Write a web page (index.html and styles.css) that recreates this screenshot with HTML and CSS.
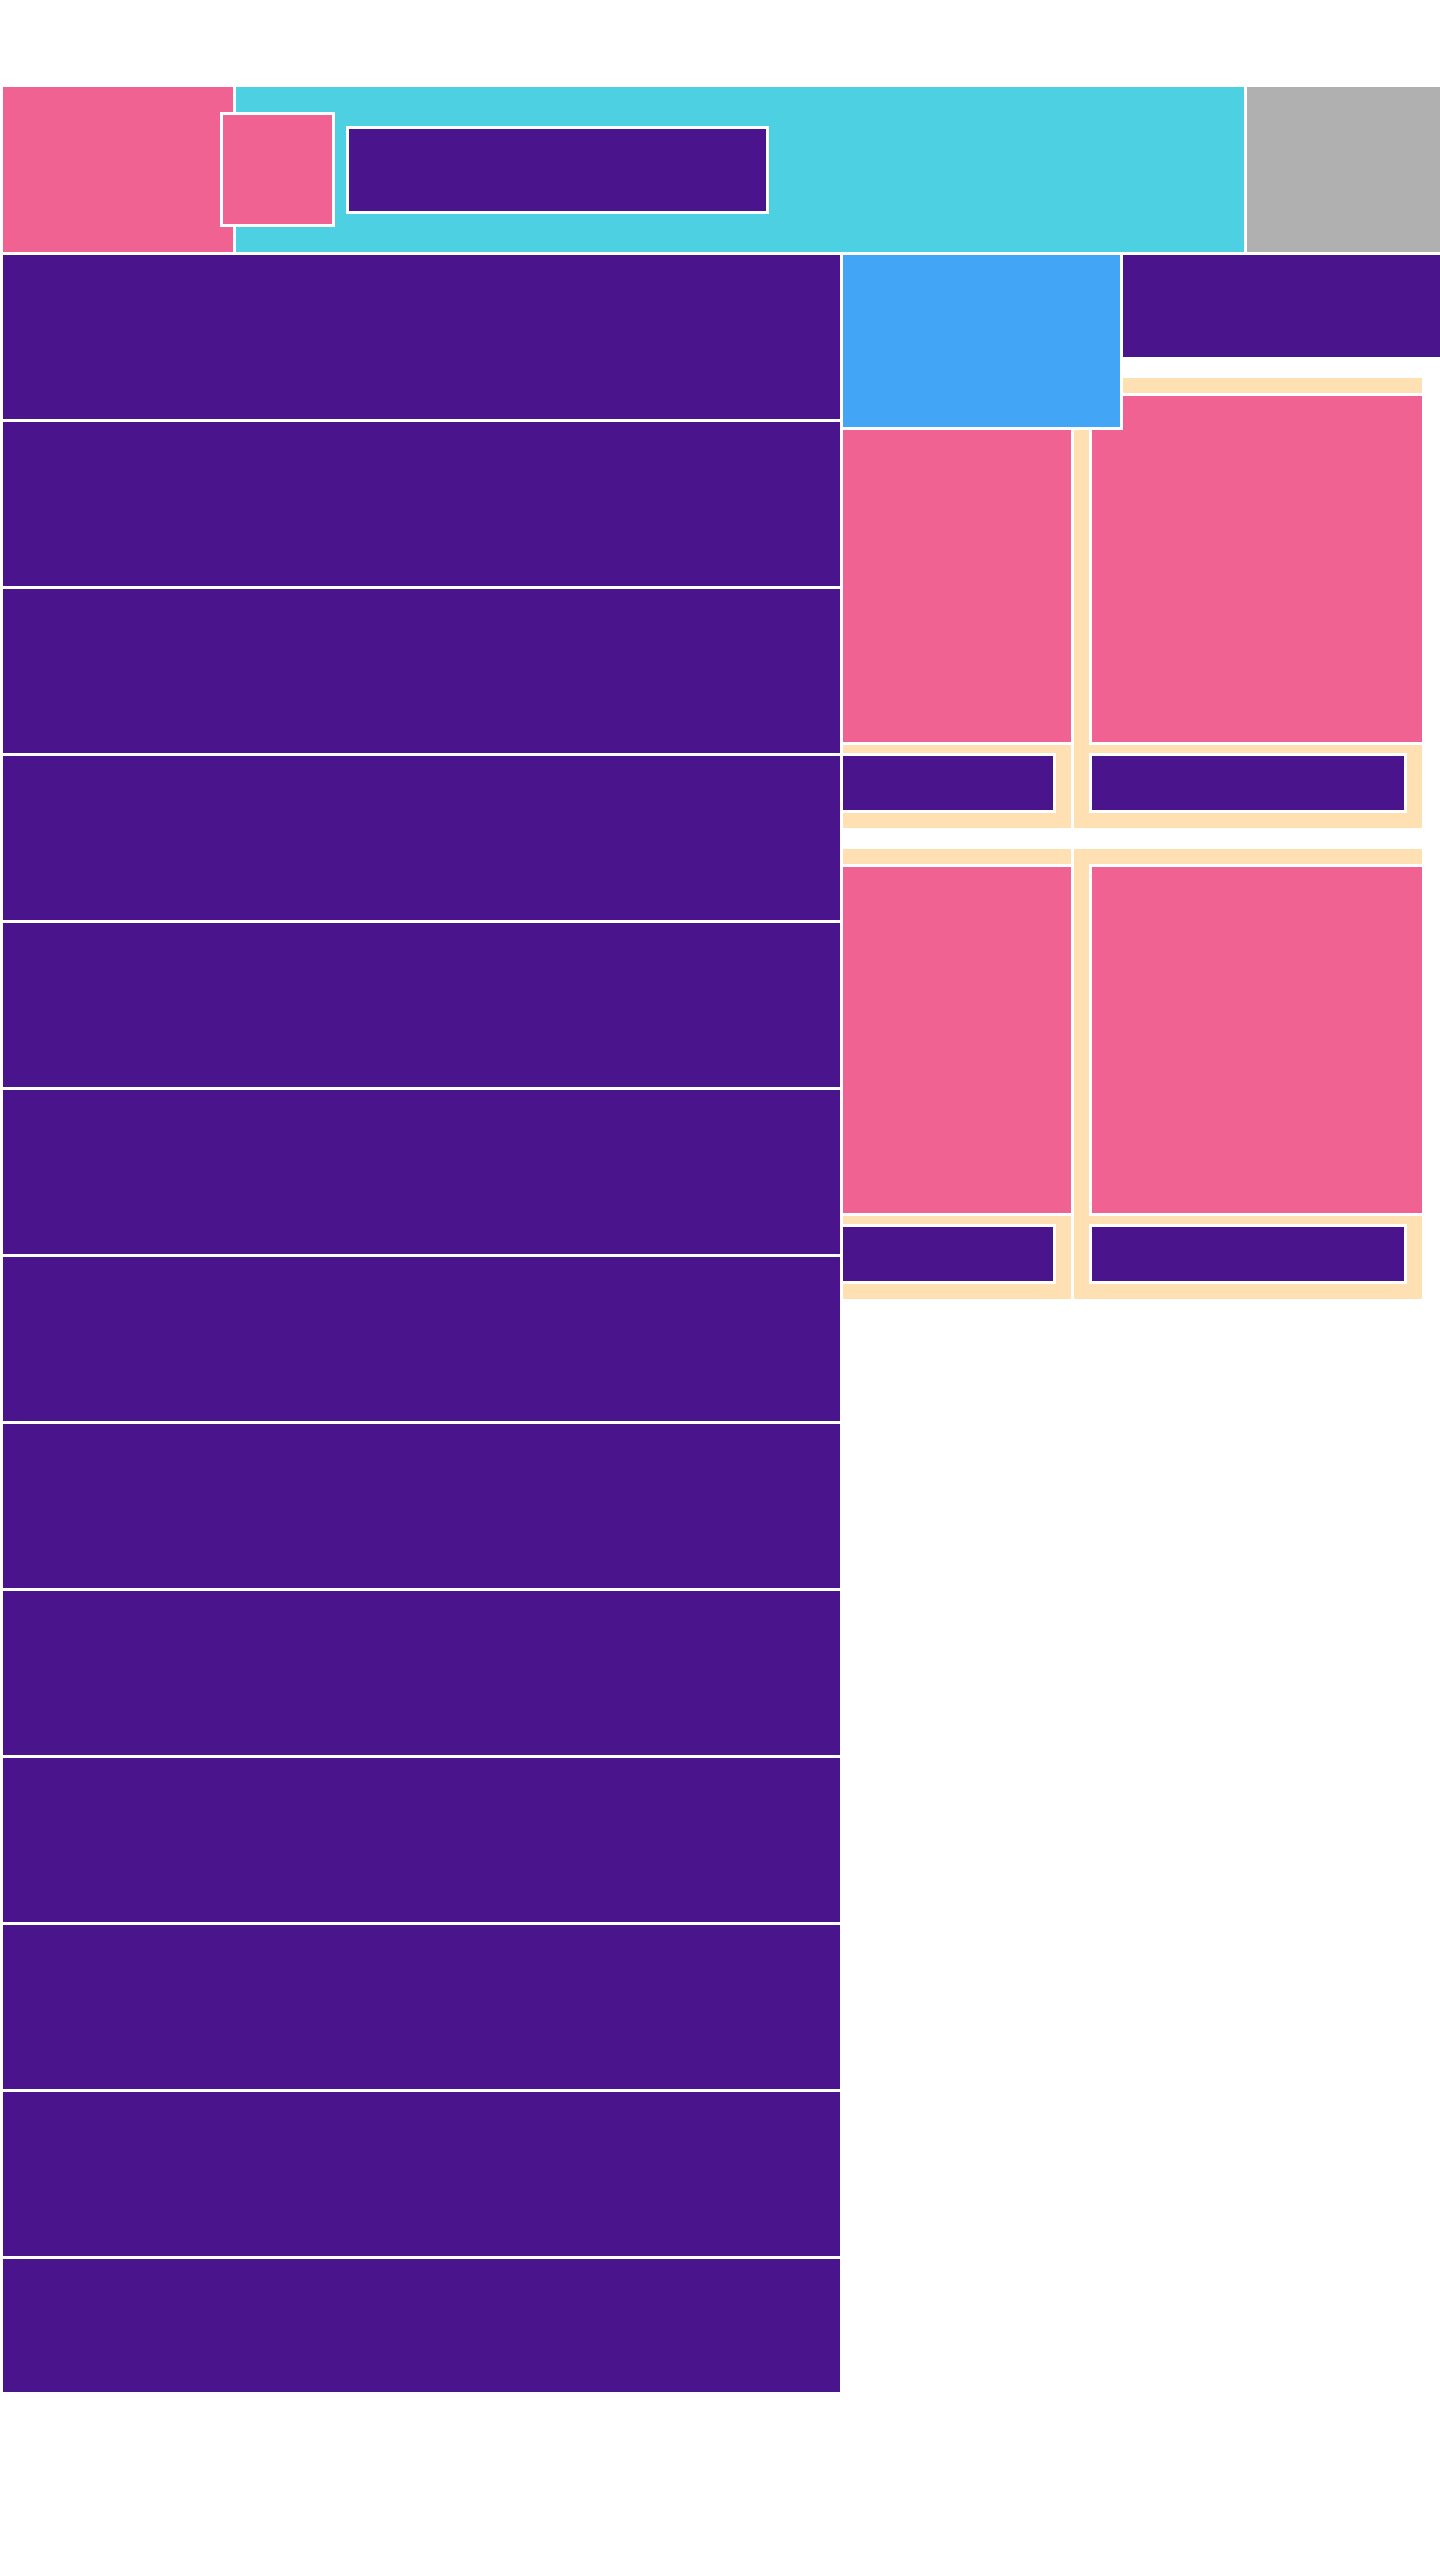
FILE: index.html
```html
<!DOCTYPE html>
<html lang="en">
<head>
    <meta charset="UTF-8">
    <title>Shop</title>
    <link rel="stylesheet" href="styles.css">
</head>
<body>
    <div class="page">
        <header class="topbar">
            <div class="topbar-side"></div>
            <div class="topbar-main">
                <div class="logo"></div>
                <div class="title-bar"></div>
            </div>
            <div class="topbar-end"></div>
        </header>

        <main class="main">
            <ul class="list">
                <li class="list-row"></li>
                <li class="list-row"></li>
                <li class="list-row"></li>
                <li class="list-row"></li>
                <li class="list-row"></li>
                <li class="list-row"></li>
                <li class="list-row"></li>
                <li class="list-row"></li>
                <li class="list-row"></li>
                <li class="list-row"></li>
                <li class="list-row"></li>
                <li class="list-row"></li>
                <li class="list-row list-row--last"></li>
            </ul>

            <section class="panel">
                <div class="panel-head">
                    <div class="panel-badge"></div>
                    <div class="panel-title"></div>
                </div>

                <div class="cards">
                    <div class="card card--flush">
                        <div class="card-img"></div>
                        <div class="card-btn"></div>
                    </div>
                    <div class="card">
                        <div class="card-img"></div>
                        <div class="card-btn"></div>
                    </div>
                    <div class="card card--flush">
                        <div class="card-img"></div>
                        <div class="card-btn"></div>
                    </div>
                    <div class="card">
                        <div class="card-img"></div>
                        <div class="card-btn"></div>
                    </div>
                </div>
            </section>
        </main>
    </div>
</body>
</html>
```

FILE: styles.css
```css
body {
    margin: 0;
    background-color: #fff;
    font-family: "Liberation Sans", Arial, sans-serif;
}

.page {
    padding: 87px 0 0 3px;
}

/* top bar */
.topbar {
    display: flex;
    gap: 3px;
    height: 165px;
}

.topbar-side {
    width: 230px;
    background-color: #f06292;
}

.topbar-main {
    flex: 1;
    display: flex;
    align-items: center;
    background-color: #4dd0e1;
}

.topbar-end {
    width: 193px;
    background-color: #b0b0b0;
}

.logo {
    width: 109px;
    height: 109px;
    margin-left: -16px;
    border: 3px solid #fff;
    background-color: #f06292;
}

.title-bar {
    width: 417px;
    height: 82px;
    margin-left: 11px;
    border: 3px solid #fff;
    background-color: #4a148c;
}

/* main area */
.main {
    display: flex;
    gap: 3px;
    margin-top: 3px;
}

.list {
    width: 837px;
    margin: 0;
    padding: 0;
    list-style: none;
    display: flex;
    flex-direction: column;
    gap: 3px;
}

.list-row {
    height: 164px;
    background-color: #4a148c;
}

.list-row--last {
    height: 133px;
}

.panel {
    flex: 1;
}

.panel-head {
    display: flex;
    align-items: flex-start;
    height: 102px;
}

.panel-badge {
    position: relative;
    z-index: 1;
    width: 277px;
    height: 172px;
    margin: -3px 0 0 -3px;
    border: 3px solid #fff;
    background-color: #42a5f5;
}

.panel-title {
    flex: 1;
    height: 102px;
    background-color: #4a148c;
}

/* product cards */
.cards {
    display: grid;
    grid-template-columns: 228px 348px;
    gap: 21px 3px;
    margin-top: 21px;
}

.card {
    display: flex;
    flex-direction: column;
    gap: 8px;
    padding: 15px 0 15px 15px;
    background-color: #ffe0b2;
}

.card--flush {
    padding-left: 0;
}

.card--flush .card-img,
.card--flush .card-btn {
    margin-left: -3px;
}

.card-img {
    height: 346px;
    border: 3px solid #fff;
    border-right: 0;
    background-color: #f06292;
}

.card-btn {
    height: 54px;
    margin-right: 15px;
    border: 3px solid #fff;
    background-color: #4a148c;
}
```
